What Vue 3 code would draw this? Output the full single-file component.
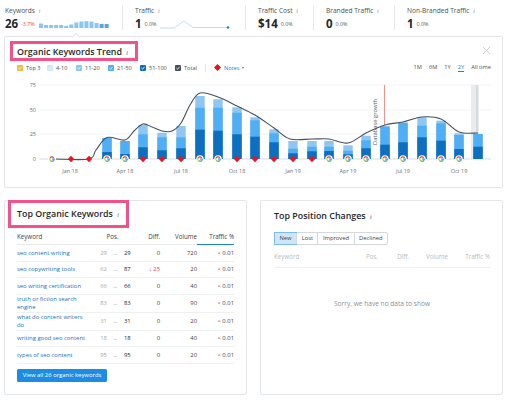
<template>
  <div class="page">
    <div class="metrics">
      <div v-for="m in metrics" :key="m.label" class="metric" :style="{ width: m.width + 'px' }">
        <div class="m-label">{{ m.label }} <i class="info">i</i></div>
        <div class="m-row">
          <b class="m-value">{{ m.value }}</b>
          <span class="m-delta" :class="{ neg: m.neg }">{{ m.delta }}</span>
          <svg v-if="m.label === 'Keywords'" class="spark" width="70" height="10" viewBox="0 0 70 10">
            <rect v-for="(h, i) in sparkBars" :key="i" :x="i * 5.05" :y="9 - h" width="4" :height="h" :fill="i > 11 ? '#5aa5dd' : '#8ac6f3'" />
          </svg>
          <svg v-if="m.label === 'Traffic'" class="spark" width="72" height="12" viewBox="0 0 72 12">
            <path d="M0 10 H14 L24 3 L33 9.5 H68" fill="none" stroke="#a9d4f5" stroke-width=".8" />
            <circle cx="68" cy="9.5" r="1.2" fill="#1b80d6" />
          </svg>
        </div>
      </div>
    </div>

    <section class="card trend">
      <span class="notch"></span>
      <div class="title-mark first">
        <h2>Organic Keywords Trend <i class="info">i</i></h2>
      </div>
      <svg class="close" width="7" height="7" viewBox="0 0 7 7">
        <path d="M0 0 7 7M7 0 0 7" stroke="#b5babe" stroke-width=".7" />
      </svg>
      <div class="controls">
        <div class="legend">
          <span v-for="l in legend" :key="l.name" class="leg" :style="{ width: l.width + 'px' }">
            <svg class="check" width="6" height="6" viewBox="0 0 6 6">
              <rect width="6" height="6" rx="1" :fill="l.color" />
              <path d="M1.4 3 2.6 4.2 4.6 1.8" fill="none" stroke="#fff" stroke-width=".8" />
            </svg>{{ l.name }}
          </span>
          <span class="sep"></span>
          <svg width="7" height="7" viewBox="0 0 7 7"><path d="M3.5 0 7 3.5 3.5 7 0 3.5Z" fill="#e8101c" /></svg>
          <span class="notes">Notes</span>
          <span class="caret"></span>
        </div>
        <div class="ranges">
          <span>1M</span><span>6M</span><span>1Y</span><span class="on">2Y</span><span>All time</span>
        </div>
      </div>
      <svg class="chart" width="497" height="100" viewBox="5 80 497 100">
        <line v-for="g in grid" :key="g.label" x1="39" x2="491" :y1="g.y" :y2="g.y" :stroke="g.y === 159 ? '#d9dcdf' : '#eef0f1'" :stroke-width="g.y === 159 ? 1.2 : .8" />
        <text v-for="g in grid" :key="'t' + g.label" x="36" :y="g.y + 2" class="axis" text-anchor="end">{{ g.label }}</text>

        <rect x="471" y="85" width="8" height="74" fill="#e9ecec" />
        <rect x="476" y="85" width="2" height="74" fill="#d8dbdc" />

        <g v-for="b in bars" :key="b.x">
          <rect :x="b.x - 4.7" :y="b.l" width="9.4" :height="159 - b.l" fill="#90c6f2" />
          <rect :x="b.x - 4.7" :y="b.m" width="9.4" :height="159 - b.m" fill="#50aef5" />
          <rect :x="b.x - 4.7" :y="b.d" width="9.4" :height="159 - b.d" fill="#0c6fbf" />
        </g>

        <line x1="384.5" x2="384.5" y1="85" y2="125" stroke="#f58f88" stroke-width="1" />
        <text class="db" transform="translate(377 145) rotate(-90)">Database growth</text>
        <path :d="linePath" fill="none" stroke="#46505c" stroke-width="1.1" />

        <g v-for="x in googleMarks" :key="'g' + x">
          <circle :cx="x" cy="159" r="3.8" fill="#fff" />
          <path :d="`M${x - 1.9} 157.9 A2.2 2.2 0 0 1 ${x + 1.7} 157.8`" fill="none" stroke="#e8453c" stroke-width="1.2" />
          <path :d="`M${x - 1.9} 157.9 A2.2 2.2 0 0 0 ${x - 1.5} 160.6`" fill="none" stroke="#f6bc05" stroke-width="1.2" />
          <path :d="`M${x - 1.5} 160.6 A2.2 2.2 0 0 0 ${x + 1.7} 160.5`" fill="none" stroke="#34a853" stroke-width="1.2" />
          <path :d="`M${x + 1.7} 160.5 A2.2 2.2 0 0 0 ${x + 2.2} 159 H${x}`" fill="none" stroke="#4285f4" stroke-width="1.2" />
        </g>
        <path v-for="x in redMarks" :key="'r' + x" :d="`M${x} 155.8 L${x + 3.2} 159 L${x} 162.2 L${x - 3.2} 159Z`" fill="#ee1420" />

        <text v-for="t in ticks" :key="t.label" :x="t.x" y="173" class="axis" text-anchor="middle">{{ t.label }}</text>
      </svg>
    </section>

    <div class="bottom">
      <section class="card half">
        <div class="title-mark second">
          <h2>Top Organic Keywords <i class="info">i</i></h2>
        </div>
        <table class="kw">
          <colgroup>
            <col class="c-kw" />
            <col class="c-prev" />
            <col class="c-arrow" />
            <col class="c-cur" />
            <col class="c-diff" />
            <col class="c-num" />
            <col class="c-num" />
          </colgroup>
          <thead>
            <tr>
              <th class="left">Keyword</th>
              <th colspan="3" class="posh">Pos.</th>
              <th>Diff.</th>
              <th>Volume</th>
              <th class="active">Traffic %</th>
            </tr>
          </thead>
          <tbody>
            <tr v-for="r in rows" :key="r.kw">
              <td class="left link">{{ r.kw }}</td>
              <td class="prev">{{ r.prev }}</td>
              <td class="arrow">→</td>
              <td class="cur">{{ r.cur }}</td>
              <td :class="{ down: r.diff !== '0' }">{{ r.diff }}</td>
              <td>{{ r.vol }}</td>
              <td>&lt; 0.01</td>
            </tr>
          </tbody>
        </table>
        <button class="view">View all 26 organic keywords</button>
      </section>

      <section class="card half changes">
        <h2>Top Position Changes <i class="info">i</i></h2>
        <div class="tabs">
          <span class="tab on">New</span><span class="tab">Lost</span><span class="tab">Improved</span><span class="tab">Declined</span>
        </div>
        <div class="ghost-head">
          <span class="g-kw">Keyword</span><span>Pos.</span><span>Diff.</span><span>Volume</span><span>Traffic %</span>
        </div>
        <p class="empty">Sorry, we have no data to show</p>
      </section>
    </div>
  </div>
</template>

<script setup>
const metrics = [
  { label: "Keywords", value: "26", delta: "-3.7%", neg: true, width: 119 },
  { label: "Traffic", value: "1", delta: "0.0%", width: 112 },
  { label: "Traffic Cost", value: "$14", delta: "0.0%", width: 57 },
  { label: "Branded Traffic", value: "0", delta: "0.0%", width: 70 },
  { label: "Non-Branded Traffic", value: "1", delta: "0.0%", width: 90 },
];

const sparkBars = [4.5, 3, 3, 3, 3, 2.2, 3.5, 5.5, 6.5, 6.8, 6.5, 5, 4, 4];

const legend = [
  { name: "Top 3", color: "#f6b93b", width: 30 },
  { name: "4-10", color: "#cfe6f8", width: 29 },
  { name: "11-20", color: "#8ac6f3", width: 32 },
  { name: "21-50", color: "#50aef5", width: 32 },
  { name: "51-100", color: "#0c6fbf", width: 35 },
  { name: "Total", color: "#46505c", width: 27 },
];

const grid = [
  { label: "75", y: 85 },
  { label: "50", y: 110 },
  { label: "25", y: 134 },
  { label: "0", y: 159 },
];

const ticks = [
  { label: "Jan 18", x: 70 },
  { label: "Apr 18", x: 125 },
  { label: "Jul 18", x: 181 },
  { label: "Oct 18", x: 237 },
  { label: "Jan 19", x: 293 },
  { label: "Apr 19", x: 348 },
  { label: "Jul 19", x: 403 },
  { label: "Oct 19", x: 459 },
];

// x, then the top of the dark, mid and light segment in page pixels
const bars = [
  [107, 152, 138, 138],
  [125, 154, 141, 141],
  [143, 147.3, 134.3, 125],
  [162, 150.3, 137.3, 132.7],
  [181, 148.3, 137.3, 126],
  [200, 129.7, 107.7, 96],
  [218, 130.7, 107.7, 99.3],
  [237, 134.3, 112.7, 107.3],
  [255, 136.7, 120.3, 117.3],
  [274, 142.3, 133.3, 129.3],
  [293, 153.3, 148.7, 141],
  [312, 151.3, 146.7, 141],
  [329, 151, 146.7, 141],
  [348, 154.3, 150.7, 145.3],
  [366, 148.3, 140.3, 135.7],
  [385, 144.7, 126.7, 126],
  [403, 142.3, 122.7, 122.7],
  [422, 137.3, 125.7, 117.3],
  [441, 140.7, 123.3, 120.7],
  [459, 149, 135, 133.3],
  [478, 146.7, 134, 134],
].map(([x, d, m, l]) => ({ x, d, m, l }));

const googleMarks = [52, 107, 125, 200, 218, 329, 348, 366, 385, 403, 422, 441, 459];
const redMarks = [71, 89, 143, 162, 181, 237, 255, 274, 293, 312];

const linePoints = [
  [56, 159], [89, 159], [96, 150], [107, 137.5], [125, 140], [134, 131], [143, 124], [152, 127],
  [162, 131], [172, 131], [181, 123], [190, 105], [200, 93], [218, 97], [237, 106], [255, 115],
  [274, 128], [290, 139], [312, 139], [329, 139], [348, 143], [366, 133], [385, 125], [403, 122],
  [422, 117], [441, 119], [459, 132], [478, 133],
];

// catmull-rom, so the line stays soft like the original
function smooth(pts) {
  let d = `M${pts[0][0]} ${pts[0][1]}`;
  for (let i = 0; i < pts.length - 1; i++) {
    const p0 = pts[i - 1] || pts[i];
    const p1 = pts[i];
    const p2 = pts[i + 1];
    const p3 = pts[i + 2] || p2;
    const c1x = p1[0] + (p2[0] - p0[0]) / 6;
    const c1y = p1[1] + (p2[1] - p0[1]) / 6;
    const c2x = p2[0] - (p3[0] - p1[0]) / 6;
    const c2y = p2[1] - (p3[1] - p1[1]) / 6;
    d += ` C${c1x} ${c1y} ${c2x} ${c2y} ${p2[0]} ${p2[1]}`;
  }
  return d;
}

const linePath = smooth(linePoints);

const rows = [
  { kw: "seo content writing", prev: 29, cur: 29, diff: "0", vol: 720 },
  { kw: "seo copywriting tools", prev: 62, cur: 87, diff: "↓ 25", vol: 20 },
  { kw: "seo writing certification", prev: 66, cur: 66, diff: "0", vol: 40 },
  { kw: "truth or fiction search engine", prev: 83, cur: 83, diff: "0", vol: 90 },
  { kw: "what do content writers do", prev: 31, cur: 31, diff: "0", vol: 20 },
  { kw: "writing good seo content", prev: 18, cur: 18, diff: "0", vol: 40 },
  { kw: "types of seo content", prev: 95, cur: 95, diff: "0", vol: 20 },
];
</script>

<style>
html, body { margin: 0; background: #fff; }
</style>

<style scoped>
.page {
  width: 507px;
  height: 400px;
  overflow: hidden;
  font-family: "Open Sans", "Liberation Sans", sans-serif;
  color: #2b3238;
  box-sizing: border-box;
  padding: 6px 4px 0 4px;
}

.metrics {
  display: flex;
  height: 30px;
}
.metric {
  flex: none;
  box-sizing: border-box;
  padding-left: 1px;
  border-right: 1px solid #e6e8ea;
  margin-right: 11px;
  height: 24px;
}
.metric:last-child { border-right: 0; margin-right: 0; }
.m-label {
  font-size: 6.6px;
  line-height: 9px;
  color: #4a5259;
  white-space: nowrap;
}
.m-row {
  display: flex;
  align-items: center;
  height: 15px;
}
.m-value {
  font-size: 11.5px;
  font-weight: 700;
  color: #22282d;
}
.m-delta {
  font-size: 5.3px;
  margin-left: 3px;
  color: #555c62;
}
.m-delta.neg { color: #e9413c; }
.spark { margin-left: 4px; flex: none; }
.info {
  font-family: "Liberation Serif", serif;
  font-size: 6px;
  color: #8b9298;
  margin-left: 2px;
}

.card {
  position: relative;
  box-sizing: border-box;
  border: 1px solid #e3e6e8;
  border-radius: 2px;
  background: #fff;
}
.trend {
  height: 152px;
  width: 499px;
  padding-top: 4px;
}
.notch {
  position: absolute;
  top: -3px;
  left: 68px;
  width: 5px;
  height: 5px;
  background: #fff;
  border-left: 1px solid #e3e6e8;
  border-top: 1px solid #e3e6e8;
  transform: rotate(45deg);
}

h2 {
  margin: 0;
  font-size: 8.9px;
  line-height: 12px;
  font-weight: 600;
  color: #22282d;
  white-space: nowrap;
}
.title-mark {
  display: block;
  box-sizing: border-box;
  border: 3px solid #f4518b;
}
.title-mark.first {
  width: 128px;
  height: 20px;
  margin-left: 5px;
  padding: 1.5px 0 0 4px;
}
.title-mark.second {
  width: 121px;
  height: 28px;
  margin: -1px 0 0 3px;
  padding: 5px 0 0 6px;
}

.close {
  position: absolute;
  top: 10px;
  right: 12px;
}

.controls {
  display: flex;
  justify-content: space-between;
  align-items: center;
  margin: 1px 11px 0 12px;
  height: 11px;
}
.legend {
  display: flex;
  align-items: center;
  font-size: 5.6px;
  color: #4a5259;
}
.leg {
  display: inline-flex;
  align-items: center;
}
.check {
  margin-right: 3px;
  flex: none;
}
.sep {
  width: 1px;
  height: 8px;
  background: #e3e6e8;
  margin: 0 8px 0 3px;
}
.notes {
  color: #1b80d6;
  margin-left: 3px;
}
.caret {
  margin-left: 3px;
  border: 1.6px solid transparent;
  border-top: 2px solid #1b80d6;
  border-bottom: 0;
}
.ranges {
  display: flex;
  gap: 7px;
  font-size: 5.7px;
  color: #4a5259;
}
.ranges .on {
  color: #1b80d6;
  border-bottom: 1.2px solid #1b80d6;
}

.chart { display: block; margin-top: 7px; }
.axis {
  font-size: 5.5px;
  fill: #6b7278;
  font-family: "Open Sans", sans-serif;
}
.db {
  font-size: 5.8px;
  fill: #555c62;
  font-family: "Open Sans", sans-serif;
}

.bottom {
  display: flex;
  justify-content: space-between;
  width: 499px;
  margin-top: 12px;
}
.half {
  width: 243px;
  height: 195px;
}

.kw {
  border-collapse: collapse;
  margin: 0 0 0 12px;
  width: 217px;
  font-size: 5.9px;
  table-layout: fixed;
}
.c-kw { width: 79px; }
.c-prev { width: 11px; }
.c-arrow { width: 16px; }
.c-cur { width: 12px; }
.c-diff { width: 25px; }
.c-num { width: 37px; }
.kw th {
  font-weight: 400;
  font-size: 6.2px;
  height: 16px;
  text-align: right;
  padding: 0;
  color: #3c4349;
  border-bottom: 1px solid #e8eaec;
}
.kw th.left, .kw td.left { text-align: left; }
.kw th.posh { text-align: center; padding-right: 6px; }
.kw th.active { border-bottom: 1px solid #1b80d6; }
.kw td {
  padding: 0;
  height: 15.6px;
  text-align: right;
  line-height: 8.5px;
  border-bottom: 1px solid #eef0f1;
  color: #3c4349;
}
.kw td.link { color: #1573c2; padding-right: 10px; }
.kw td.prev { color: #a5aaae; text-align: right; }
.kw td.arrow { color: #8b9298; text-align: center; }
.kw td.cur { color: #22282d; text-align: left; padding-left: 1px; }
.kw td.down { color: #e9413c; }

.view {
  display: block;
  width: 90px;
  height: 13px;
  margin: 5px 0 0 12px;
  padding: 0;
  border: 0;
  border-radius: 1.5px;
  background: #1d8de4;
  color: #fff;
  font: 5.9px "Open Sans", sans-serif;
  text-align: center;
}

.changes { padding: 9px 12px 0 13px; }
.tabs {
  display: inline-flex;
  margin-top: 7px;
  border: 1px solid #d5d9dc;
  border-radius: 2px;
  height: 13px;
  box-sizing: border-box;
  font-size: 5.8px;
  color: #3c4349;
}
.tab {
  display: flex;
  align-items: center;
  padding: 0 4.5px;
  border-left: 1px solid #d5d9dc;
}
.tab:first-child { border-left: 0; }
.tab.on {
  background: #cfe6f8;
  outline: 1px solid #7cbcf0;
}
.ghost-head {
  height: 16px;
  margin-top: 6px;
  border-bottom: 1px solid #eef0f1;
  font-size: 6.2px;
  line-height: 12px;
  color: #b8bcc0;
  display: grid;
  grid-template-columns: 60px 44px 31px 39px 42px;
}
.ghost-head span { text-align: right; white-space: nowrap; }
.ghost-head .g-kw { text-align: left; }
.empty {
  margin: 31px 0 0 0;
  text-align: center;
  font-size: 6.6px;
  color: #8b9298;
}
</style>
